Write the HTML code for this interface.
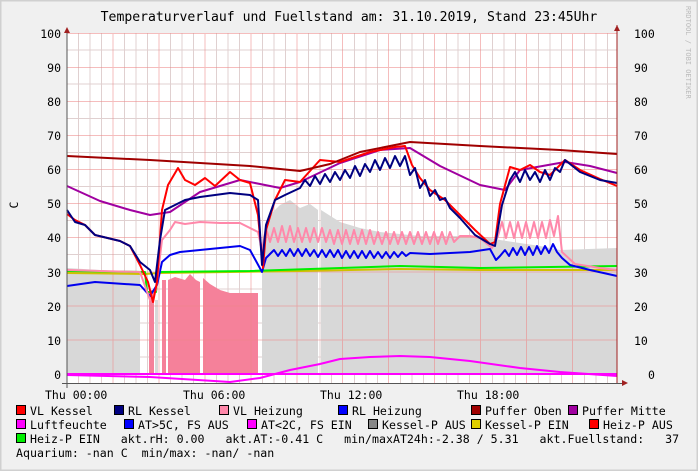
<!DOCTYPE html>
<html><head><meta charset="utf-8"><style>
html,body{margin:0;padding:0;width:698px;height:471px;overflow:hidden;background:#f0f0f0}
text{font-family:"DejaVu Sans Mono","Liberation Mono",monospace;white-space:pre}
</style></head><body>
<svg width="698" height="471" xmlns="http://www.w3.org/2000/svg">
<rect x="0" y="0" width="698" height="471" fill="#f0f0f0"/>
<rect x="0.5" y="0.5" width="697" height="470" fill="none" stroke="#d0d0d0" stroke-width="2"/>
<rect x="67" y="33" width="550" height="350" fill="#fff"/>
<g stroke="#e0d0d0" stroke-width="1">
<path d="M78.5 33V383M90 33V383M101.5 33V383M124.5 33V383M136 33V383M147.5 33V383M170.5 33V383M182 33V383M193.5 33V383M216.5 33V383M228 33V383M239.5 33V383M262.5 33V383M274 33V383M285.5 33V383M308.5 33V383M320 33V383M331.5 33V383M354.5 33V383M366 33V383M377.5 33V383M400.5 33V383M412 33V383M423.5 33V383M446.5 33V383M458 33V383M469.5 33V383M492.5 33V383M504 33V383M515.5 33V383M538.5 33V383M550 33V383M561.5 33V383M584.5 33V383M596 33V383M607.5 33V383"/>
<path d="M67 50H617M67 84H617M67 118.5H617M67 152.5H617M67 186.5H617M67 220.5H617M67 254.5H617M67 289H617M67 323H617M67 357H617"/>
</g>
<path fill="#d8d8d8" d="M67 374V268L100 270L140 272V374ZM155 374V300H158V374ZM262 374V240L270 215L280 205L290 200L300 208L310 204L318 210V374ZM321 374V210L340 222L360 228L380 232L420 236L480 236L500 240L540 246L560 250L617 248V374Z"/>
<path fill="#f5819a" d="M149 374V290H154V374ZM162 374V280H166V374ZM168 374V280L175 277L185 280L190 274L196 280L200 282V374ZM203 374V278L210 284L220 290L230 293L258 293V374Z"/>
<g stroke="#e88" stroke-width="1" opacity="0.55">
<path d="M113 33V383M159 33V383M205 33V383M251 33V383M297 33V383M342.5 33V383M388.5 33V383M434.5 33V383M480.5 33V383M526.5 33V383M572.5 33V383"/>
<path d="M67 33.5H617M67 67.5H617M67 101.5H617M67 135.5H617M67 169.5H617M67 203.5H617M67 237.5H617M67 272H617M67 306H617M67 340H617"/>
</g>
<g fill="none" stroke-width="2" stroke-linejoin="round">
<polyline stroke="#ff00ff" points="67,375 150,377 230,382 260,378 290,370 320,364 340,359 370,357 400,356 430,357 470,361 520,368 560,372 617,376"/>
<polyline stroke="#ff00ff" points="67,374 617,374"/>
<polyline stroke="#d0c000" points="67,273 145,274 160,273 300,271 400,269 480,270 617,270"/>
<polyline stroke="#00ee00" points="67,271 145,272 147,292 156,292 158,272 250,271 400,266 480,268 617,266"/>
<polyline stroke="#0000ee" points="67,286 95,282 140,285 150,296 157,285 162,262 170,255 180,252 200,250 220,248 240,246 250,250 262,272 266,258 270,254 274,250 278,256 282,250 286,256 290,249 294,256 298,249 302,256 306,249 310,256 314,250 318,257 322,250 326,257 330,250 334,257 338,250 342,258 346,251 350,258 354,251 358,258 362,251 366,258 370,251 374,258 378,252 382,258 386,252 390,258 394,252 398,257 402,252 406,256 410,253 430,254 470,252 490,249 496,260 500,256 505,250 509,256 513,248 517,255 521,247 525,255 529,247 533,255 537,246 541,254 545,246 549,253 553,244 557,252 562,258 570,265 590,270 617,276"/>
<polyline stroke="#ff88aa" points="67,270 100,271 140,272 150,300 156,290 162,240 170,230 175,222 185,224 200,222 220,223 240,223 258,232 262,250 266,228 270,242 274,228 278,242 282,226 286,242 290,226 294,242 298,228 302,242 306,228 310,242 314,228 318,242 322,228 326,242 330,230 334,244 338,230 342,244 346,230 350,244 354,230 358,244 362,230 366,244 370,230 374,244 378,232 382,244 386,232 390,244 394,232 398,244 402,232 406,244 410,232 414,244 418,232 422,244 426,232 430,244 434,232 438,244 442,232 446,244 450,232 454,242 460,236 470,236 480,238 492,248 498,236 502,222 506,238 510,222 514,238 518,222 522,238 526,222 530,238 534,222 538,238 542,222 546,238 550,220 554,236 558,216 562,252 575,264 600,268 617,270"/>
<polyline stroke="#a000a0" points="67,186 100,201 130,210 150,215 170,212 200,192 240,180 260,184 280,188 300,182 340,163 380,150 410,148 440,166 480,185 505,190 520,170 565,162 590,166 617,173"/>
<polyline stroke="#ff0000" points="67,214 75,220 85,225 95,235 120,241 130,246 140,265 148,282 153,302 157,282 162,210 168,185 178,168 185,180 195,185 205,178 215,186 230,172 240,180 250,183 258,215 263,268 266,230 275,200 285,180 300,182 320,160 340,162 370,152 395,147 405,146 412,165 420,178 430,190 445,200 460,215 475,230 490,244 495,242 500,204 510,167 520,170 530,165 540,172 550,175 565,160 580,170 600,179 617,186"/>
<polyline stroke="#000080" points="67,210 75,222 85,225 95,235 120,241 130,246 140,262 150,270 155,282 160,240 165,210 175,205 185,200 200,197 215,195 230,193 250,195 258,200 262,265 266,225 275,200 285,195 300,188 305,180 310,186 315,176 320,184 325,174 330,182 335,172 340,180 345,170 350,178 355,166 360,176 365,164 370,172 375,160 380,170 385,158 390,168 395,156 400,166 405,156 410,175 415,168 420,188 425,180 430,196 435,190 440,200 445,198 450,208 460,218 475,235 490,244 495,246 502,205 510,180 515,172 520,182 525,170 530,180 535,172 540,182 545,170 550,180 555,168 560,172 565,160 580,172 600,180 617,183"/>
<polyline stroke="#a00000" points="67,156 150,160 250,166 300,171 330,164 360,152 410,142 480,146 560,150 617,154"/>
</g>
<path d="M67 28V388" stroke="#555" stroke-width="1"/>
<path d="M62 383.5H622" stroke="#555" stroke-width="1"/>
<path d="M64 33L67 27L70 33ZM614 31L617 25L620 31Z" fill="#a02020"/>
<path d="M617 25V383" stroke="#a02020" stroke-width="1"/>
<path d="M622 380L628 383L622 386Z" fill="#a02020"/>
<g font-size="11.5" fill="#000">
<text x="349" y="21" font-size="13.1" text-anchor="middle">Temperaturverlauf und Fuellstand am: 31.10.2019, Stand 23:45Uhr</text>
<g text-anchor="end">
<text x="61" y="38">100</text><text x="61" y="72">90</text><text x="61" y="106">80</text><text x="61" y="140">70</text><text x="61" y="174">60</text><text x="61" y="208">50</text><text x="61" y="242">40</text><text x="61" y="277">30</text><text x="61" y="311">20</text><text x="61" y="345">10</text><text x="61" y="379">0</text>
</g>
<g>
<text x="634" y="38">100</text><text x="634" y="72">90</text><text x="634" y="106">80</text><text x="634" y="140">70</text><text x="634" y="174">60</text><text x="634" y="208">50</text><text x="634" y="242">40</text><text x="634" y="277">30</text><text x="634" y="311">20</text><text x="634" y="345">10</text><text x="648" y="379">0</text>
</g>
<text transform="translate(18,205) rotate(-90)" text-anchor="middle">C</text>
<text x="45" y="399">Thu 00:00</text><text x="183" y="399">Thu 06:00</text><text x="320" y="399">Thu 12:00</text><text x="457" y="399">Thu 18:00</text>
<text transform="translate(686,6) rotate(90)" font-size="7" fill="#bbb">RRDTOOL / TOBI OETIKER</text>
</g>
<g stroke="#000" stroke-width="1">
<rect x="16.5" y="405.5" width="9" height="9" fill="#ff0000"/>
<rect x="114.5" y="405.5" width="9" height="9" fill="#000080"/>
<rect x="219.5" y="405.5" width="9" height="9" fill="#ff88aa"/>
<rect x="338.5" y="405.5" width="9" height="9" fill="#0000ff"/>
<rect x="471.5" y="405.5" width="9" height="9" fill="#a00000"/>
<rect x="568.5" y="405.5" width="9" height="9" fill="#a000a0"/>
<rect x="16.5" y="419.5" width="9" height="9" fill="#ff00ff"/>
<rect x="124.5" y="419.5" width="9" height="9" fill="#0000ff"/>
<rect x="247.5" y="419.5" width="9" height="9" fill="#ff00ff"/>
<rect x="368.5" y="419.5" width="9" height="9" fill="#888888"/>
<rect x="471.5" y="419.5" width="9" height="9" fill="#e0d000"/>
<rect x="589.5" y="419.5" width="9" height="9" fill="#ff0000"/>
<rect x="16.5" y="433.5" width="9" height="9" fill="#00ee00"/>
</g>
<g font-size="11.6" fill="#000">
<text x="30" y="415">VL Kessel</text><text x="128" y="415">RL Kessel</text><text x="233" y="415">VL Heizung</text><text x="352" y="415">RL Heizung</text><text x="485" y="415">Puffer Oben</text><text x="582" y="415">Puffer Mitte</text>
<text x="30" y="429">Luftfeuchte</text><text x="138" y="429">AT&gt;5C, FS AUS</text><text x="261" y="429">AT&lt;2C, FS EIN</text><text x="382" y="429">Kessel-P AUS</text><text x="485" y="429">Kessel-P EIN</text><text x="603" y="429">Heiz-P AUS</text>
<text x="30" y="443">Heiz-P EIN   akt.rH: 0.00   akt.AT:-0.41 C   min/maxAT24h:-2.38 / 5.31   akt.Fuellstand:   37</text>
<text x="16" y="457">Aquarium: -nan C  min/max: -nan/ -nan</text>
</g>
</svg>
</body></html>
